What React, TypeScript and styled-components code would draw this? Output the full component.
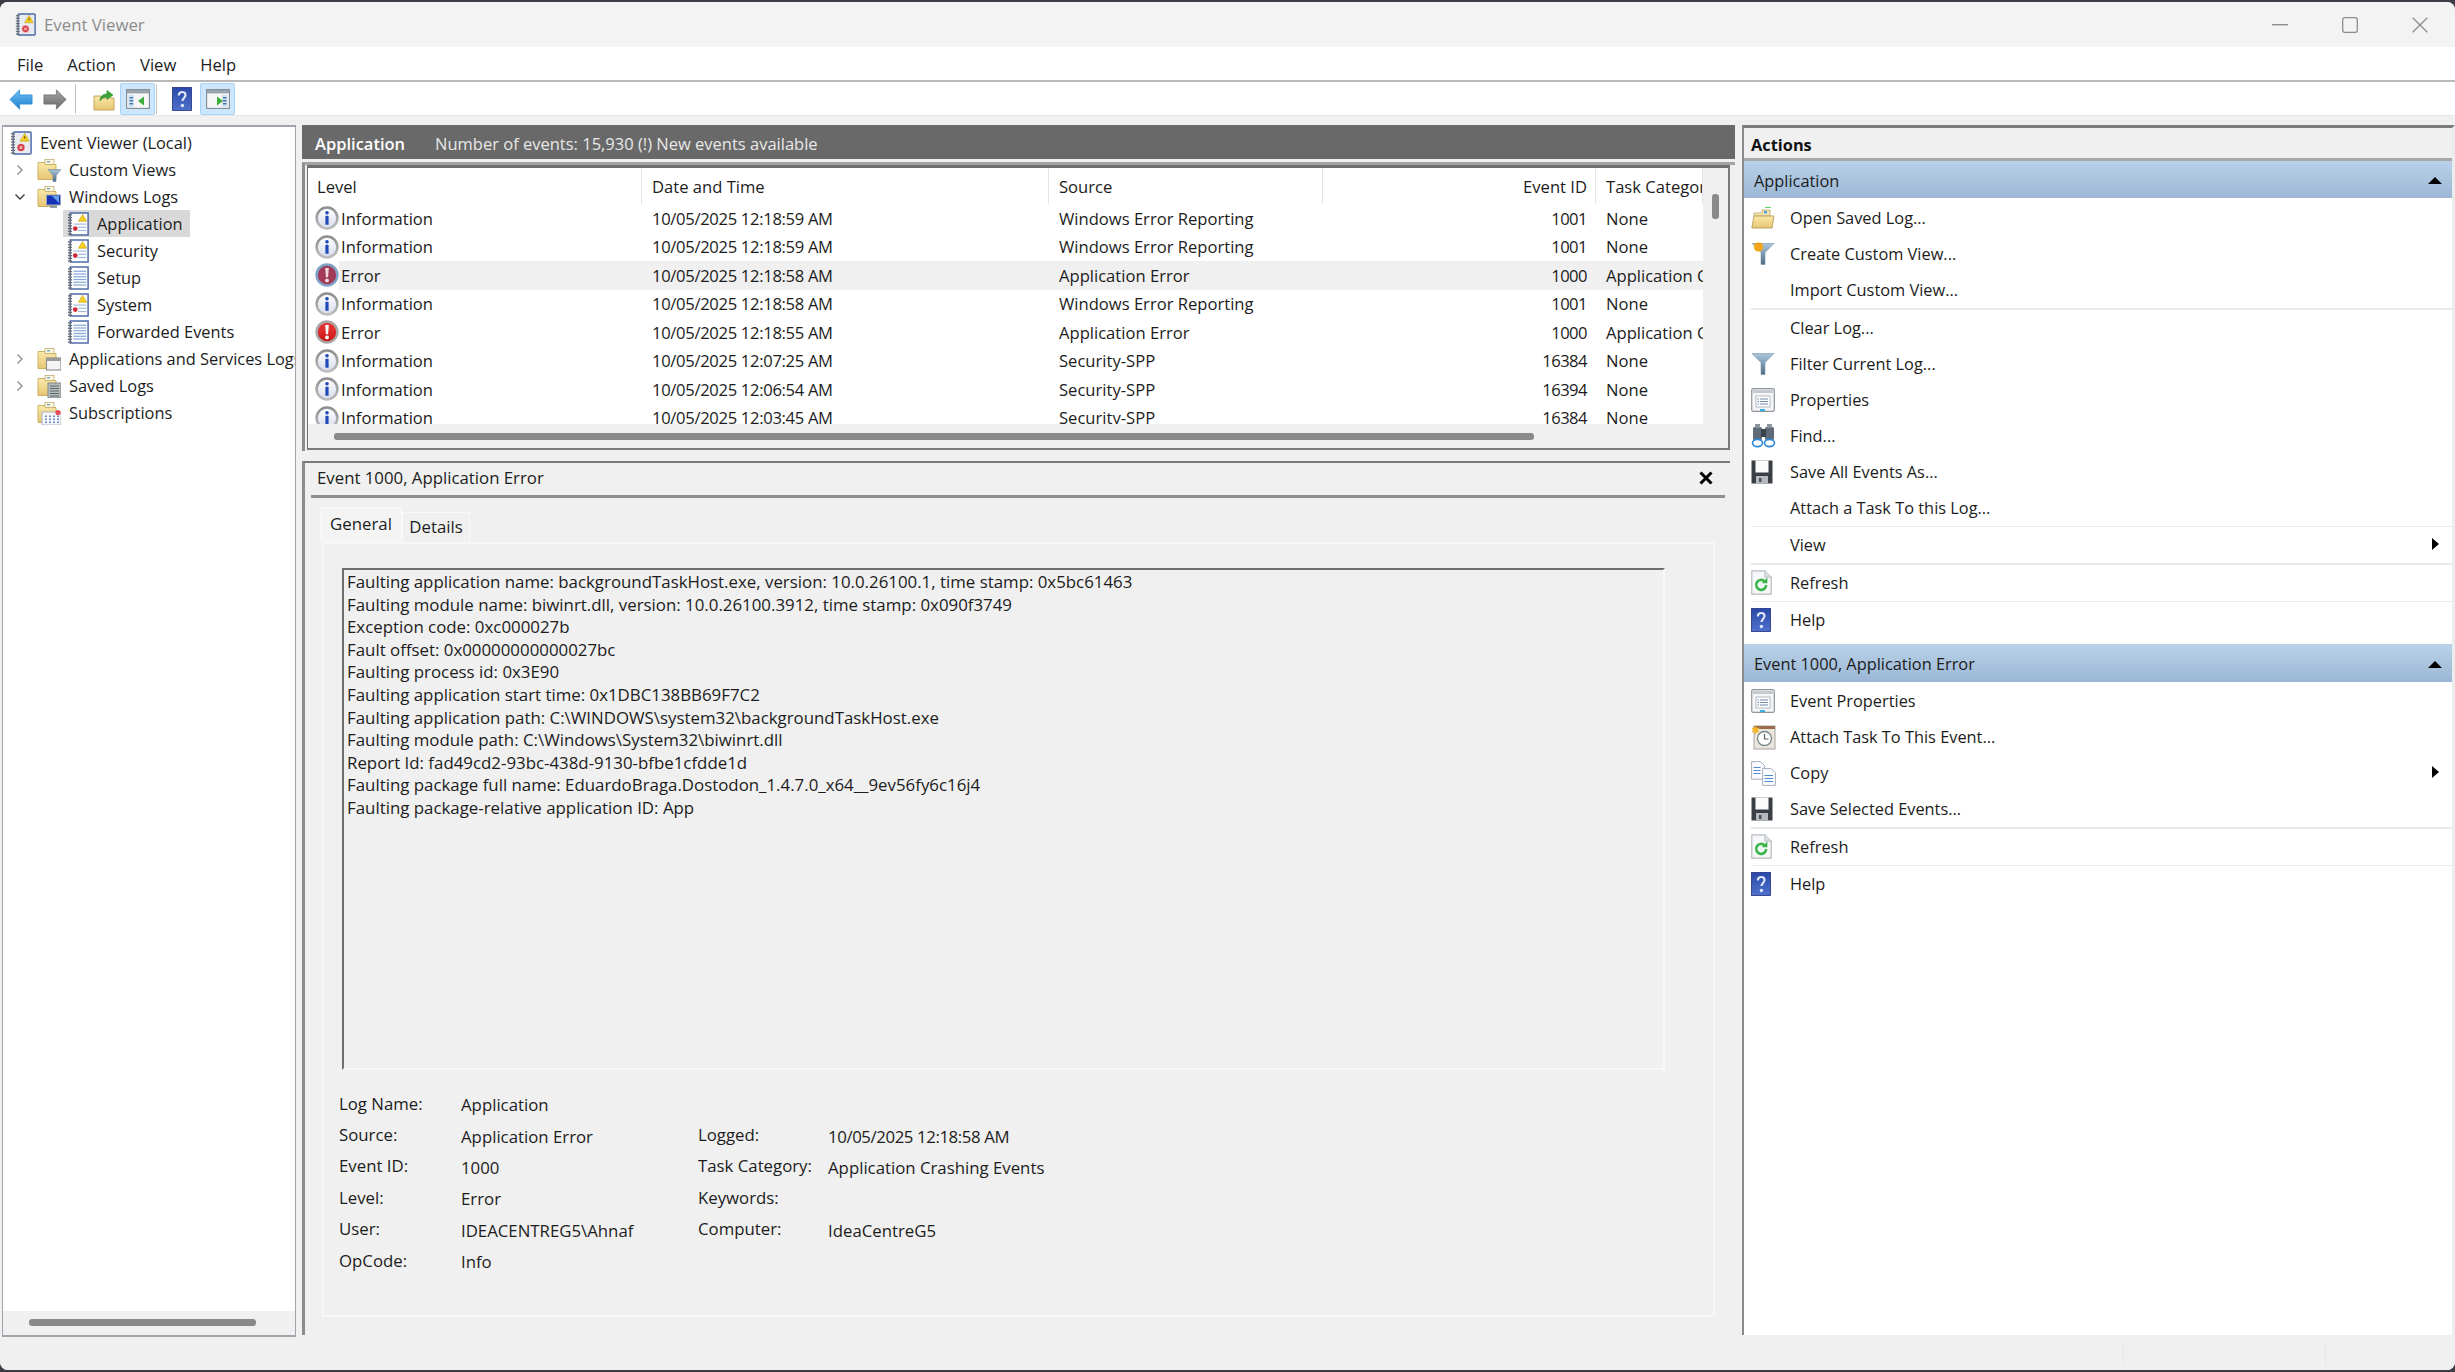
import React from 'react'
import styled, { createGlobalStyle } from 'styled-components'

const UI_FONT = '"Open Sans", "Noto Sans", "Liberation Sans", sans-serif'

const GlobalStyle = createGlobalStyle`
  html, body {
    margin: 0;
    padding: 0;
    background: #3c3c44;
  }
  body {
    font-family: ${UI_FONT};
    font-size: 16.6px;
    color: #1c1c1c;
    overflow: hidden;
  }
  * { box-sizing: border-box; }
`

/* ---------- icons ---------- */

type IconProps = { size?: number }

const GradientDefs = styled.svg`
  position: absolute;
  width: 0;
  height: 0;
`

function Defs() {
  return (
    <GradientDefs aria-hidden="true">
      <defs>
        <linearGradient id="infoFill" x1="0" y1="0" x2="0" y2="1">
          <stop offset="0" stopColor="#ffffff" />
          <stop offset="1" stopColor="#d5dcec" />
        </linearGradient>
        <linearGradient id="infoRing" x1="0" y1="0" x2="0" y2="1">
          <stop offset="0" stopColor="#8e8e8e" />
          <stop offset="1" stopColor="#bcbcbc" />
        </linearGradient>
        <linearGradient id="errFill" x1="0" y1="0" x2="0" y2="1">
          <stop offset="0" stopColor="#ee3a3a" />
          <stop offset="1" stopColor="#c81414" />
        </linearGradient>
        <linearGradient id="folderFill" x1="0" y1="0" x2="0" y2="1">
          <stop offset="0" stopColor="#fbe9a8" />
          <stop offset="1" stopColor="#e6c676" />
        </linearGradient>
        <linearGradient id="blueArrow" x1="0" y1="0" x2="0" y2="1">
          <stop offset="0" stopColor="#6cc0f0" />
          <stop offset="1" stopColor="#1f7fd0" />
        </linearGradient>
        <linearGradient id="grayArrow" x1="0" y1="0" x2="0" y2="1">
          <stop offset="0" stopColor="#a6a6a6" />
          <stop offset="1" stopColor="#6a6a6a" />
        </linearGradient>
        <linearGradient id="helpFill" x1="0" y1="0" x2="0" y2="1">
          <stop offset="0" stopColor="#2a48a8" />
          <stop offset="1" stopColor="#4f72cc" />
        </linearGradient>
        <linearGradient id="funnelFill" x1="0" y1="0" x2="0" y2="1">
          <stop offset="0" stopColor="#a9c6dc" />
          <stop offset="1" stopColor="#4f6f88" />
        </linearGradient>
      </defs>
    </GradientDefs>
  )
}

function InfoIcon({ size = 24 }: IconProps) {
  return (
    <svg width={size} height={size} viewBox="0 0 24 24">
      <circle cx="12" cy="12" r="10.4" fill="url(#infoFill)" stroke="url(#infoRing)" strokeWidth="2.5" />
      <circle cx="12" cy="6.8" r="1.8" fill="#1f49b8" />
      <rect x="10.4" y="9.8" width="3.2" height="9" rx="0.6" fill="#1f49b8" />
    </svg>
  )
}

function ErrorIcon({ size = 24, dim }: IconProps & { dim?: boolean }) {
  return (
    <svg width={size} height={size} viewBox="0 0 24 24">
      <circle
        cx="12"
        cy="12"
        r="10.4"
        fill={dim ? '#a33a58' : 'url(#errFill)'}
        stroke={dim ? '#7da3c4' : '#a9a9a9'}
        strokeWidth="2.5"
      />
      <path d="M10.2 5h3.6l-.7 9.2h-2.2z" fill={dim ? '#f0d8de' : '#fff'} />
      <circle cx="12" cy="17.4" r="1.9" fill={dim ? '#f0d8de' : '#fff'} />
    </svg>
  )
}

function LogBook({ size = 22, alert }: IconProps & { alert?: boolean }) {
  return (
    <svg width={size} height={size + 2} viewBox="0 0 24 26">
      <rect x="3.5" y="1" width="19.5" height="24" fill="#fdfdfd" stroke="#4a6aa8" strokeWidth="1.6" />
      {[3, 6, 9, 12, 15, 18, 21, 24].map((y) => (
        <rect key={y} x="1" y={y - 0.7} width="4.4" height="1.4" fill="#6c6c6c" />
      ))}
      {alert ? (
        <>
          <path d="M17 2.5l4.6 7.5h-9.2z" fill="#f5d020" stroke="#c09a10" strokeWidth="0.6" />
          <rect x="7" y="12.5" width="14" height="1.2" fill="#9db8dc" />
          <rect x="12" y="16" width="9" height="1.2" fill="#9db8dc" />
          <rect x="12" y="19.5" width="9" height="1.2" fill="#9db8dc" />
          <circle cx="9" cy="18" r="2.6" fill="#d02a3a" />
        </>
      ) : (
        [5, 8, 11, 14, 17, 20].map((y) => <rect key={y} x="7" y={y} width="14" height="1.3" fill="#86a8d8" />)
      )}
    </svg>
  )
}

function RootBook({ size = 22 }: IconProps) {
  return (
    <svg width={size} height={size + 2} viewBox="0 0 24 26">
      <rect x="3.5" y="1" width="19.5" height="24" rx="1" fill="#e8ecf2" stroke="#4a6aa8" strokeWidth="1.6" />
      {[3, 6, 9, 12, 15, 18, 21, 24].map((y) => (
        <rect key={y} x="1" y={y - 0.7} width="4.4" height="1.4" fill="#6c6c6c" />
      ))}
      <path d="M16 2.5l5 8.5h-10z" fill="#f5cf20" stroke="#b8960f" strokeWidth="0.6" />
      <rect x="15.4" y="5.4" width="1.2" height="3" fill="#7a5a00" />
      <circle cx="12" cy="18" r="4.4" fill="#d83a44" stroke="#f4f4f4" strokeWidth="0.8" />
      <path d="M10.3 16.3l3.4 3.4M13.7 16.3l-3.4 3.4" stroke="#fff" strokeWidth="1" />
    </svg>
  )
}

function FolderBase() {
  return (
    <>
      <path d="M1 4.5h8.5l1 2H19v15H1z" fill="url(#folderFill)" stroke="#c9a85a" strokeWidth="0.9" />
      <rect x="8" y="1.5" width="9" height="5" fill="#fdf6d8" stroke="#b5a469" strokeWidth="0.7" />
      <rect x="10" y="3" width="3" height="1.4" fill="#7aa4cf" />
    </>
  )
}

function FolderIcon({ size = 24, badge }: IconProps & { badge: 'filter' | 'monitor' | 'window' | 'logs' | 'calendar' }) {
  return (
    <svg width={size} height={size} viewBox="0 0 24 24">
      <FolderBase />
      {badge === 'filter' && (
        <path d="M11 11.5h13l-5 6v6h-3v-6z" fill="url(#funnelFill)" stroke="#5b7488" strokeWidth="0.5" />
      )}
      {badge === 'monitor' && (
        <>
          <rect x="9.5" y="10" width="14" height="10" fill="#1630b8" stroke="#9ba8b6" strokeWidth="1" />
          <path d="M15 11l7 0 0 7z" fill="#5fa0e6" />
          <rect x="13" y="20.5" width="7" height="2.4" fill="#8a94a0" />
        </>
      )}
      {badge === 'window' && (
        <>
          <rect x="9.5" y="11" width="14.5" height="12" fill="#f4f4f4" stroke="#8a8a8a" strokeWidth="1.1" />
          <rect x="9.5" y="11" width="14.5" height="3" fill="#9a9a9a" />
        </>
      )}
      {badge === 'logs' && (
        <>
          <rect x="11" y="9" width="13" height="15" fill="#b7bdbb" stroke="#7a807e" strokeWidth="0.9" />
          {[11.5, 14, 16.5, 19, 21.5].map((y) => (
            <rect key={y} x="13" y={y} width="9" height="1" fill="#5d6a70" />
          ))}
        </>
      )}
      {badge === 'calendar' && (
        <>
          <rect x="5" y="11" width="19" height="13" fill="#f6f8fc" stroke="#9aa7bd" strokeWidth="0.8" />
          <circle cx="21" cy="11.5" r="2.6" fill="#ee4a55" />
          {[8, 12, 16, 20].flatMap((x) =>
            [14.5, 17.5, 20.5].map((y) => <rect key={`${x}-${y}`} x={x} y={y} width="2" height="1.6" fill="#6f8fc0" />)
          )}
        </>
      )}
    </svg>
  )
}

function NavArrow({ dir }: { dir: 'back' | 'forward' }) {
  return (
    <svg width="25" height="23" viewBox="0 0 26 24">
      <path
        d={dir === 'back' ? 'M1 12L11.5 1.5v5.5H25v10H11.5v5.5z' : 'M25 12L14.5 1.5v5.5H1v10h13.5v5.5z'}
        fill={dir === 'back' ? 'url(#blueArrow)' : 'url(#grayArrow)'}
        stroke={dir === 'back' ? '#2a8ad8' : '#6a6a6a'}
        strokeWidth="0.8"
      />
    </svg>
  )
}

function FolderUpIcon() {
  return (
    <svg width="22" height="24" viewBox="0 0 22 24">
      <path d="M1 9h7l2 2h11v12H1z" fill="url(#folderFill)" stroke="#bd9e4e" strokeWidth="0.9" />
      <path d="M7 14c0-5 3-7 7-7V3.5L20 8l-6 4.5V10c-3 0-5 1-7 4z" fill="#3aa63a" stroke="#278a27" strokeWidth="0.6" />
    </svg>
  )
}

function PaneIcon({ side }: { side: 'left' | 'right' }) {
  const left = side === 'left'
  return (
    <svg width="24" height="20" viewBox="0 0 24 20">
      <rect x="0.6" y="0.6" width="22.8" height="18.8" fill="#f6f6f6" stroke="#7d8a96" strokeWidth="1.1" />
      <rect x="1" y="1" width="22" height="3.4" fill="#9aa4ad" />
      <rect x={left ? 2.5 : 16} y="6" width="5.5" height="12" fill="#cfe0f0" />
      {[8, 11, 14].map((y) => (
        <rect key={y} x={left ? 3.5 : 17} y={y} width="3.5" height="1.4" fill="#3f74b0" />
      ))}
      <path d={left ? 'M12 12l6-4.5v9z' : 'M17 12l-6-4.5v9z'} fill="#3cae3c" />
    </svg>
  )
}

function HelpIcon({ size = 20 }: IconProps) {
  return (
    <svg width={size} height={size + 4} viewBox="0 0 20 24">
      <rect x="0.5" y="0.5" width="19" height="23" fill="url(#helpFill)" stroke="#1f2f80" strokeWidth="0.8" />
      <path
        d="M6.8 8.6c0-2.4 1.5-3.6 3.4-3.6s3.3 1.2 3.3 3.1c0 2.9-3 3-3 6"
        fill="none"
        stroke="#dfe6f8"
        strokeWidth="2.2"
      />
      <circle cx="10.4" cy="18.5" r="1.7" fill="#dfe6f8" />
    </svg>
  )
}

function OpenFolderIcon() {
  return (
    <svg width="24" height="24" viewBox="0 0 24 24">
      <rect x="14" y="1" width="6" height="1" fill="#56d856" />
      <path d="M3 10V7h8V4h8v6z" fill="#f4e6b4" stroke="#b89c58" strokeWidth="0.7" />
      <rect x="13" y="5" width="3" height="2.4" fill="#4a9fe0" />
      <path d="M0.8 22l2.2-12h20l-2 12z" fill="url(#folderFill)" stroke="#b89c58" strokeWidth="0.9" />
    </svg>
  )
}

function FunnelIcon({ star }: { star?: boolean }) {
  return (
    <svg width="24" height="24" viewBox="0 0 24 24">
      <path d="M1 1.5h22l-9 9v12h-4v-12z" fill="url(#funnelFill)" stroke="#6a8498" strokeWidth="0.5" />
      {star && <circle cx="7.5" cy="5" r="4.6" fill="#f6a81c" />}
      {star && <path d="M1 1.5h12l-4 1.2z" fill="#f08c10" />}
    </svg>
  )
}

function PropsIcon() {
  return (
    <svg width="24" height="24" viewBox="0 0 24 24">
      <rect x="0.7" y="0.7" width="22.6" height="22.6" rx="1.6" fill="#f4f5f6" stroke="#8e959c" strokeWidth="1.2" />
      <rect x="2" y="2" width="20" height="3" fill="#c6cacd" />
      <rect x="5" y="8" width="14" height="11" fill="#fff" stroke="#9aa0a6" strokeWidth="0.7" />
      {[10.5, 13, 15.5].map((y) => (
        <rect key={y} x="9" y={y} width="8" height="1" fill="#6e8aa8" />
      ))}
      <rect x="6.5" y="10.5" width="1.4" height="1" fill="#3f7fc0" />
      <rect x="6.5" y="13" width="1.4" height="1" fill="#3f7fc0" />
      <rect x="6.5" y="15.5" width="1.4" height="1" fill="#3f7fc0" />
      <rect x="9" y="21" width="5" height="2" fill="#38b0e8" />
    </svg>
  )
}

function BinocularsIcon() {
  return (
    <svg width="25" height="25" viewBox="0 0 25 25">
      <rect x="2" y="4" width="9" height="13" rx="1.5" fill="#5f6b78" />
      <rect x="14" y="4" width="9" height="13" rx="1.5" fill="#5f6b78" />
      <rect x="4" y="1" width="5" height="4" fill="#8b95a0" />
      <rect x="16" y="1" width="5" height="4" fill="#8b95a0" />
      <rect x="10" y="6" width="5" height="8" fill="#39424c" />
      <ellipse cx="6.5" cy="20" rx="5" ry="3.6" fill="#fff" stroke="#2a88d8" strokeWidth="1.6" />
      <ellipse cx="18.5" cy="20" rx="5" ry="3.6" fill="#fff" stroke="#2a88d8" strokeWidth="1.6" />
    </svg>
  )
}

function FloppyIcon() {
  return (
    <svg width="22" height="24" viewBox="0 0 22 24">
      <path d="M0.5 0.5h21v23h-21z" fill="#3a3f45" />
      <rect x="4.5" y="0.5" width="13" height="12" fill="#fbfbfb" />
      <rect x="5" y="16" width="12" height="7.5" fill="#b5b9bd" />
      <rect x="8" y="18" width="2.5" height="4" fill="#4a4f55" />
    </svg>
  )
}

function RefreshIcon() {
  return (
    <svg width="21" height="25" viewBox="0 0 21 25">
      <path d="M0.8 0.8h13l6.4 6.4v17H0.8z" fill="#f6f7f8" stroke="#b8bcc0" strokeWidth="1.2" />
      <path d="M14 0.8v6.4h6.2" fill="#dcdfe2" stroke="#b8bcc0" strokeWidth="1" />
      <path d="M15.2 15a5 5 0 1 1-1.6-3.8" fill="none" stroke="#3bb54a" strokeWidth="2.6" />
      <path d="M16.4 7.6v5.6h-5.6z" fill="#3bb54a" />
    </svg>
  )
}

function ClockTaskIcon() {
  return (
    <svg width="25" height="25" viewBox="0 0 25 25">
      <rect x="3" y="1" width="21" height="23" fill="#eae6de" stroke="#a5a5a0" strokeWidth="1" />
      <rect x="3" y="1" width="21" height="3" fill="#9a6a4a" />
      <circle cx="13.5" cy="13.5" r="7" fill="#fff" stroke="#7d8a8a" strokeWidth="1.4" />
      <path d="M13.5 9v5h4" fill="none" stroke="#55606a" strokeWidth="1.2" />
      <path d="M4.5 0l1.2 3 3-.6-1.8 2.6 1.8 2.6-3-.6-1.2 3-1.2-3-3 .6L2 5 .3 2.4l3 .6z" fill="#f5b52a" />
    </svg>
  )
}

function CopyIcon() {
  return (
    <svg width="25" height="25" viewBox="0 0 25 25">
      <path d="M0.6 0.6h9l3.8 3.8v13.8H0.6z" fill="#fafbff" stroke="#a8aeb8" strokeWidth="1" />
      {[6, 9, 12].map((y) => (
        <rect key={y} x="2.5" y={y} width="7" height="1" fill="#4f8ad0" />
      ))}
      <path d="M11.6 7.6h8.6l4.2 4.2v12.6H11.6z" fill="#fafbff" stroke="#a8aeb8" strokeWidth="1" />
      {[14, 17, 20].map((y) => (
        <rect key={y} x="13.5" y={y} width="8.5" height="1" fill="#4f8ad0" />
      ))}
    </svg>
  )
}

/* ---------- frame ---------- */

const Page = styled.div`
  width: 2455px;
  height: 1372px;
  padding-top: 2px;
  overflow: hidden;
`

const Window = styled.div`
  height: 1368px;
  display: flex;
  flex-direction: column;
  background: #f0f0f0;
  border-radius: 8px;
  overflow: hidden;
`

const TitleBar = styled.div`
  height: 45px;
  flex: none;
  display: flex;
  align-items: center;
  padding-left: 15px;
  background: #f3f3f3;
`

const TitleText = styled.span`
  margin-left: 8px;
  color: #8c8c8c;
  font-size: 16.8px;
`

const WindowControls = styled.div`
  margin-left: auto;
  display: flex;
  align-items: center;
`

const ControlButton = styled.div`
  width: 70px;
  height: 45px;
  display: flex;
  align-items: center;
  justify-content: center;
`

const MenuBar = styled.div`
  height: 35px;
  flex: none;
  display: flex;
  align-items: center;
  padding: 2px 0 0 17px;
  gap: 24px;
  background: #fff;
  border-bottom: 2px solid #b9b9b9;
`

const MenuItem = styled.span`
  font-size: 16.6px;
`

const ToolBar = styled.div`
  height: 34px;
  flex: none;
  display: flex;
  align-items: center;
  padding: 1px 0 0 8px;
  background: #fff;
  border-bottom: 1px solid #e6e6e6;
`

const ToolButton = styled.div<{ $active?: boolean; $gap?: number }>`
  width: ${(p) => (p.$active ? 35 : 26)}px;
  height: 32px;
  flex: none;
  margin-left: ${(p) => p.$gap ?? 0}px;
  display: flex;
  align-items: center;
  justify-content: center;
  background: ${(p) => (p.$active ? '#cde6fb' : 'transparent')};
  border: 1px solid ${(p) => (p.$active ? '#a6d4f7' : 'transparent')};
  border-radius: 2px;
`

const ToolSep = styled.div<{ $gap: number }>`
  width: 1px;
  height: 30px;
  flex: none;
  margin-left: ${(p) => p.$gap}px;
  background: #c4c4c4;
`

const Workspace = styled.div`
  flex: 1;
  min-height: 0;
  display: flex;
  padding: 9px 0 0 2px;
`

const StatusBar = styled.div`
  height: 32px;
  flex: none;
  display: flex;
  justify-content: flex-end;
  background: #f0f0f0;
`

const StatusCell = styled.div<{ $width: number }>`
  width: ${(p) => p.$width}px;
  margin: 4px 0;
  border-left: 1px solid #e6e6e6;
`

/* ---------- tree ---------- */

const TreePane = styled.aside`
  width: 294px;
  flex: none;
  height: 1212px;
  display: flex;
  flex-direction: column;
  background: #fff;
  font-size: 16.4px;
  border: 2px solid #a3a3ad;
  border-right-width: 1px;
  border-left-width: 1px;
`

const TreeBody = styled.div`
  flex: 1;
  padding-top: 2px;
  overflow: hidden;
`

const TreeRow = styled.div<{ $depth: number }>`
  height: 27px;
  display: flex;
  align-items: center;
  white-space: nowrap;
  padding-left: ${(p) => [7, 7, 64][p.$depth]}px;

  svg {
    flex: none;
  }
`

const TreeChevron = styled.span`
  width: 20px;
  flex: none;
  margin-right: 7px;
  display: flex;
  align-items: center;
  justify-content: center;
`

const TreeLabel = styled.span`
  flex: none;
  margin-left: 8px;
  line-height: 27px;
`

const SelectedBand = styled.span`
  display: flex;
  align-items: center;
  height: 27px;
  padding: 0 7px 0 4px;
  margin-left: -4px;
  background: #d9d9d9;
`

const TreeScroll = styled.div`
  height: 24px;
  flex: none;
  padding: 8px 0 0 26px;
  background: #f0f0f0;
`

const ScrollThumb = styled.div<{ $length: number; $vertical?: boolean }>`
  width: ${(p) => (p.$vertical ? 7 : p.$length)}px;
  height: ${(p) => (p.$vertical ? p.$length : 7)}px;
  border-radius: 3px;
  background: #8a8a8a;
`

function Chevron({ open }: { open?: boolean }) {
  return (
    <svg width="12" height="12" viewBox="0 0 12 12">
      <path
        d={open ? 'M1.5 3.5L6 8l4.5-4.5' : 'M3.5 1.5L8 6l-4.5 4.5'}
        fill="none"
        stroke={open ? '#3a3a3a' : '#8c8c8c'}
        strokeWidth="1.3"
      />
    </svg>
  )
}

/* ---------- center ---------- */

const Center = styled.main`
  width: 1433px;
  flex: none;
  margin-left: 6px;
  height: 1210px;
  display: flex;
  flex-direction: column;
`

const Band = styled.div`
  height: 34px;
  flex: none;
  display: flex;
  align-items: center;
  padding: 2px 0 0 13px;
  background: #696969;
  color: #e8e8e8;
  font-size: 16.5px;
`

const BandTitle = styled.strong`
  width: 120px;
  color: #fff;
  font-weight: 600;
`

const ListFrame = styled.section`
  height: 289px;
  flex: none;
  margin-top: 3px;
  padding: 0 5px 1px 2px;
  border-top: 3px solid #a3a3a3;
  border-left: 3px solid #8c8c8c;
`

const ListInner = styled.div`
  height: 100%;
  display: grid;
  grid-template-columns: 1395px 25px;
  background: #f0f0f0;
  border-top: 3px solid #6e6e6e;
  border-left: 1px solid #6e6e6e;
  border-right: 2px solid #7a7a7a;
  border-bottom: 2px solid #7a7a7a;
`

const ListColumn = styled.div`
  display: flex;
  flex-direction: column;
`

const ListBody = styled.div`
  height: 256px;
  flex: none;
  overflow: hidden;
  background: #fff;
`

const COLUMNS = '334px 407px 274px 273px 107px'

const HeaderRow = styled.div`
  height: 36px;
  display: grid;
  grid-template-columns: ${COLUMNS};
`

const HeaderCell = styled.div<{ $right?: boolean; $inset?: number }>`
  display: flex;
  align-items: center;
  justify-content: ${(p) => (p.$right ? 'flex-end' : 'flex-start')};
  padding: ${(p) => (p.$right ? '0 8px 0 0' : `0 0 0 ${p.$inset ?? 10}px`)};
  overflow: hidden;
  white-space: nowrap;
  border-right: 1px solid #e5e5e5;
`

const Row = styled.div<{ $selected?: boolean }>`
  height: 28.5px;
  display: grid;
  grid-template-columns: ${COLUMNS};
  background: ${(p) => (p.$selected ? 'linear-gradient(to right, transparent 31px, #f0f0f0 31px)' : 'transparent')};
`

const Cell = styled.div<{ $right?: boolean; $tracking?: number }>`
  display: flex;
  align-items: center;
  justify-content: ${(p) => (p.$right ? 'flex-end' : 'flex-start')};
  padding: ${(p) => (p.$right ? '0 9px 0 0' : '0 0 0 10px')};
  overflow: hidden;
  white-space: nowrap;
  letter-spacing: ${(p) => p.$tracking ?? 0}px;
`

const LevelCell = styled(Cell)`
  gap: 2px;
  padding-left: 7px;
`

const HScroll = styled.div`
  flex: 1;
  padding: 9px 0 0 26px;
`

const VScroll = styled.div`
  padding: 26px 0 0 9px;
`

const DetailPane = styled.section`
  flex: 1;
  margin: 10px 5px 0 0;
  display: flex;
  flex-direction: column;
  font-size: 16.8px;
  border-top: 2px solid #7a7a7a;
  border-left: 3px solid #8c8c8c;
`

const DetailHead = styled.div`
  height: 32px;
  flex: none;
  display: flex;
  align-items: center;
  justify-content: space-between;
  padding: 0 17px 3px 12px;
`

const DetailRule = styled.div`
  height: 3px;
  flex: none;
  margin: 0 5px 0 6px;
  background: #8f8f8f;
`

const TabStrip = styled.div`
  flex: none;
  display: flex;
  align-items: flex-end;
  height: 35px;
  margin: 9px 0 0 15px;
`

const Tab = styled.div<{ $active?: boolean }>`
  height: ${(p) => (p.$active ? 35 : 30)}px;
  width: ${(p) => (p.$active ? 82 : 68)}px;
  display: flex;
  align-items: center;
  justify-content: center;
  padding-bottom: ${(p) => (p.$active ? 4 : 2)}px;
  background: ${(p) => (p.$active ? '#f4f4f4' : '#f0f0f0')};
  border: 1px solid #f8f8f8;
  border-bottom: none;
`

const TabPanel = styled.div`
  height: 775px;
  flex: none;
  margin: 0 15px 0 17px;
  padding: 24px 0 0 18px;
  border: 2px solid #f7f7f7;
`

const DescriptionBox = styled.pre`
  margin: 0;
  width: 1323px;
  height: 502px;
  padding: 1px 3px;
  font: inherit;
  font-size: 16.85px;
  line-height: 22.6px;
  border-top: 2px solid #6e6e6e;
  border-left: 2px solid #6e6e6e;
  border-right: 2px solid #f8f8f8;
  border-bottom: 2px solid #f8f8f8;
`

const InfoGrid = styled.dl`
  margin: 19px 0 0 -3px;
  display: grid;
  grid-template-columns: 122px 237px 130px 1fr;
  grid-auto-rows: 31.4px;
`

const InfoLabel = styled.dt`
  display: flex;
  align-items: center;
  padding-bottom: 3px;
`

const InfoValue = styled.dd<{ $tracking?: number }>`
  display: flex;
  align-items: center;
  margin: 0;
  letter-spacing: ${(p) => p.$tracking ?? 0}px;
`

/* ---------- actions ---------- */

const ActionsPane = styled.aside`
  flex: 1;
  margin-left: 7px;
  height: 1210px;
  background: #fff;
  font-size: 16.35px;
  border-top: 3px solid #7d7d7d;
  border-left: 2px solid #8a8a8a;
  border-right: 3px solid #ececec;
`

const ActionsHead = styled.div`
  height: 30px;
  display: flex;
  align-items: center;
  padding: 3px 0 0 7px;
  background: #f0f0f0;
  font-weight: 700;
  color: #111;
`

const SectionHead = styled.div`
  height: 40px;
  display: flex;
  align-items: center;
  justify-content: space-between;
  padding: 2px 10px 0 10px;
  border-top: 3px solid;
  border-color: #a8a8a8 transparent transparent;
  background: linear-gradient(to bottom, #bad2ea, #9bb7d4);
  background-clip: padding-box;
`

const SectionHeadLater = styled(SectionHead)`
  height: 38px;
  margin-top: 6px;
  border-top: 0;
`

const ActionList = styled.div<{ $pad: number }>`
  padding-top: ${(p) => p.$pad}px;
`

const ActionRow = styled.div`
  height: 36px;
  display: flex;
  align-items: center;
  padding-right: 13px;
`

const ActionIcon = styled.span`
  width: 46px;
  flex: none;
  padding-left: 7px;
  display: flex;
  align-items: center;
`

const Submenu = styled.span`
  margin: 0 0 3px auto;
  width: 0;
  height: 0;
  border-left: 7px solid #000;
  border-top: 6px solid transparent;
  border-bottom: 6px solid transparent;
`

const Collapse = styled.span`
  width: 0;
  height: 0;
  border-left: 7px solid transparent;
  border-right: 7px solid transparent;
  border-bottom: 7px solid #000;
`

const ActionSep = styled.div`
  height: 1.5px;
  margin-left: 7px;
  background: #e9e9e9;
`

/* ---------- data ---------- */

type TreeItem = {
  depth: 0 | 1 | 2
  label: string
  icon: React.ReactNode
  chevron?: 'open' | 'closed'
  selected?: boolean
}

const tree: TreeItem[] = [
  { depth: 0, label: 'Event Viewer (Local)', icon: <RootBook /> },
  { depth: 1, label: 'Custom Views', chevron: 'closed', icon: <FolderIcon badge="filter" /> },
  { depth: 1, label: 'Windows Logs', chevron: 'open', icon: <FolderIcon badge="monitor" /> },
  { depth: 2, label: 'Application', icon: <LogBook alert />, selected: true },
  { depth: 2, label: 'Security', icon: <LogBook alert /> },
  { depth: 2, label: 'Setup', icon: <LogBook /> },
  { depth: 2, label: 'System', icon: <LogBook alert /> },
  { depth: 2, label: 'Forwarded Events', icon: <LogBook /> },
  { depth: 1, label: 'Applications and Services Logs', chevron: 'closed', icon: <FolderIcon badge="window" /> },
  { depth: 1, label: 'Saved Logs', chevron: 'closed', icon: <FolderIcon badge="logs" /> },
  { depth: 1, label: 'Subscriptions', icon: <FolderIcon badge="calendar" /> },
]

const events = [
  ['Information', '10/05/2025 12:18:59 AM', 'Windows Error Reporting', '1001', 'None'],
  ['Information', '10/05/2025 12:18:59 AM', 'Windows Error Reporting', '1001', 'None'],
  ['Error', '10/05/2025 12:18:58 AM', 'Application Error', '1000', 'Application Crashing Events'],
  ['Information', '10/05/2025 12:18:58 AM', 'Windows Error Reporting', '1001', 'None'],
  ['Error', '10/05/2025 12:18:55 AM', 'Application Error', '1000', 'Application Crashing Events'],
  ['Information', '10/05/2025 12:07:25 AM', 'Security-SPP', '16384', 'None'],
  ['Information', '10/05/2025 12:06:54 AM', 'Security-SPP', '16394', 'None'],
  ['Information', '10/05/2025 12:03:45 AM', 'Security-SPP', '16384', 'None'],
]

const description = `Faulting application name: backgroundTaskHost.exe, version: 10.0.26100.1, time stamp: 0x5bc61463
Faulting module name: biwinrt.dll, version: 10.0.26100.3912, time stamp: 0x090f3749
Exception code: 0xc000027b
Fault offset: 0x00000000000027bc
Faulting process id: 0x3E90
Faulting application start time: 0x1DBC138BB69F7C2
Faulting application path: C:\\WINDOWS\\system32\\backgroundTaskHost.exe
Faulting module path: C:\\Windows\\System32\\biwinrt.dll
Report Id: fad49cd2-93bc-438d-9130-bfbe1cfdde1d
Faulting package full name: EduardoBraga.Dostodon_1.4.7.0_x64__9ev56fy6c16j4
Faulting package-relative application ID: App`

const infoRows = [
  ['Log Name:', 'Application', '', ''],
  ['Source:', 'Application Error', 'Logged:', '10/05/2025 12:18:58 AM'],
  ['Event ID:', '1000', 'Task Category:', 'Application Crashing Events'],
  ['Level:', 'Error', 'Keywords:', ''],
  ['User:', 'IDEACENTREG5\\Ahnaf', 'Computer:', 'IdeaCentreG5'],
  ['OpCode:', 'Info', '', ''],
]

type ActionItem = { label: string; icon?: React.ReactNode; submenu?: boolean; sep?: boolean }

const appActions: ActionItem[] = [
  { label: 'Open Saved Log...', icon: <OpenFolderIcon /> },
  { label: 'Create Custom View...', icon: <FunnelIcon star /> },
  { label: 'Import Custom View...', sep: true },
  { label: 'Clear Log...' },
  { label: 'Filter Current Log...', icon: <FunnelIcon /> },
  { label: 'Properties', icon: <PropsIcon /> },
  { label: 'Find...', icon: <BinocularsIcon /> },
  { label: 'Save All Events As...', icon: <FloppyIcon /> },
  { label: 'Attach a Task To this Log...', sep: true },
  { label: 'View', submenu: true, sep: true },
  { label: 'Refresh', icon: <RefreshIcon />, sep: true },
  { label: 'Help', icon: <HelpIcon /> },
]

const eventActions: ActionItem[] = [
  { label: 'Event Properties', icon: <PropsIcon /> },
  { label: 'Attach Task To This Event...', icon: <ClockTaskIcon /> },
  { label: 'Copy', icon: <CopyIcon />, submenu: true },
  { label: 'Save Selected Events...', icon: <FloppyIcon />, sep: true },
  { label: 'Refresh', icon: <RefreshIcon />, sep: true },
  { label: 'Help', icon: <HelpIcon /> },
]

function ActionRows({ items }: { items: ActionItem[] }) {
  return (
    <>
      {items.map((item) => (
        <React.Fragment key={item.label}>
          <ActionRow>
            <ActionIcon>{item.icon}</ActionIcon>
            {item.label}
            {item.submenu && <Submenu />}
          </ActionRow>
          {item.sep && <ActionSep />}
        </React.Fragment>
      ))}
    </>
  )
}

export default function App() {
  return (
    <Page>
      <GlobalStyle />
      <Defs />
      <Window>
        <TitleBar>
          <RootBook size={21} />
          <TitleText>Event Viewer</TitleText>
          <WindowControls>
            <ControlButton>
              <svg width="16" height="2">
                <rect width="16" height="1.4" fill="#8c8c8c" />
              </svg>
            </ControlButton>
            <ControlButton>
              <svg width="16" height="16">
                <rect x="0.7" y="0.7" width="14.6" height="14.6" rx="2" fill="none" stroke="#8c8c8c" strokeWidth="1.3" />
              </svg>
            </ControlButton>
            <ControlButton>
              <svg width="16" height="16">
                <path d="M0.7 0.7l14.6 14.6M15.3 0.7L0.7 15.3" stroke="#8c8c8c" strokeWidth="1.3" />
              </svg>
            </ControlButton>
          </WindowControls>
        </TitleBar>
        <MenuBar>
          {['File', 'Action', 'View', 'Help'].map((m) => (
            <MenuItem key={m}>{m}</MenuItem>
          ))}
        </MenuBar>
        <ToolBar>
          <ToolButton>
            <NavArrow dir="back" />
          </ToolButton>
          <ToolButton $gap={8}>
            <NavArrow dir="forward" />
          </ToolButton>
          <ToolSep $gap={7} />
          <ToolButton $gap={15}>
            <FolderUpIcon />
          </ToolButton>
          <ToolButton $active $gap={3}>
            <PaneIcon side="left" />
          </ToolButton>
          <ToolSep $gap={1} />
          <ToolButton $gap={12}>
            <HelpIcon />
          </ToolButton>
          <ToolButton $active $gap={5}>
            <PaneIcon side="right" />
          </ToolButton>
        </ToolBar>
        <Workspace>
          <TreePane>
            <TreeBody>
              {tree.map((t) => (
                <TreeRow key={t.label} $depth={t.depth}>
                  {t.depth === 1 && <TreeChevron>{t.chevron && <Chevron open={t.chevron === 'open'} />}</TreeChevron>}
                  {t.selected ? (
                    <SelectedBand>
                      {t.icon}
                      <TreeLabel>{t.label}</TreeLabel>
                    </SelectedBand>
                  ) : (
                    <>
                      {t.icon}
                      <TreeLabel>{t.label}</TreeLabel>
                    </>
                  )}
                </TreeRow>
              ))}
            </TreeBody>
            <TreeScroll>
              <ScrollThumb $length={227} />
            </TreeScroll>
          </TreePane>

          <Center>
            <Band>
              <BandTitle>Application</BandTitle>
              Number of events: 15,930 (!) New events available
            </Band>
            <ListFrame>
              <ListInner>
                <ListColumn>
                  <ListBody>
                    <HeaderRow>
                      <HeaderCell $inset={9}>Level</HeaderCell>
                      <HeaderCell>Date and Time</HeaderCell>
                      <HeaderCell>Source</HeaderCell>
                      <HeaderCell $right>Event ID</HeaderCell>
                      <HeaderCell>Task Category</HeaderCell>
                    </HeaderRow>
                    {events.map((e, i) => (
                      <Row key={i} $selected={i === 2}>
                        <LevelCell>
                          {e[0] === 'Error' ? <ErrorIcon dim={i === 2} /> : <InfoIcon />}
                          {e[0]}
                        </LevelCell>
                        <Cell $tracking={-0.32}>{e[1]}</Cell>
                        <Cell>{e[2]}</Cell>
                        <Cell $right $tracking={-0.55}>
                          {e[3]}
                        </Cell>
                        <Cell>{e[4]}</Cell>
                      </Row>
                    ))}
                  </ListBody>
                  <HScroll>
                    <ScrollThumb $length={1200} />
                  </HScroll>
                </ListColumn>
                <VScroll>
                  <ScrollThumb $vertical $length={25} />
                </VScroll>
              </ListInner>
            </ListFrame>

            <DetailPane>
              <DetailHead>
                Event 1000, Application Error
                <svg width="14" height="14" viewBox="0 0 14 14">
                  <path d="M1.5 1.5l11 11M12.5 1.5l-11 11" stroke="#000" strokeWidth="3" />
                </svg>
              </DetailHead>
              <DetailRule />
              <TabStrip>
                <Tab $active>General</Tab>
                <Tab>Details</Tab>
              </TabStrip>
              <TabPanel>
                <DescriptionBox>{description}</DescriptionBox>
                <InfoGrid>
                  {infoRows.map((r) => (
                    <React.Fragment key={r[0]}>
                      <InfoLabel>{r[0]}</InfoLabel>
                      <InfoValue>{r[1]}</InfoValue>
                      <InfoLabel>{r[2]}</InfoLabel>
                      <InfoValue $tracking={r[2] === 'Logged:' ? -0.4 : 0}>{r[3]}</InfoValue>
                    </React.Fragment>
                  ))}
                </InfoGrid>
              </TabPanel>
            </DetailPane>
          </Center>

          <ActionsPane>
            <ActionsHead>Actions</ActionsHead>
            <SectionHead>
              Application
              <Collapse />
            </SectionHead>
            <ActionList $pad={2}>
              <ActionRows items={appActions} />
            </ActionList>
            <SectionHeadLater>
              Event 1000, Application Error
              <Collapse />
            </SectionHeadLater>
            <ActionList $pad={1}>
              <ActionRows items={eventActions} />
            </ActionList>
          </ActionsPane>
        </Workspace>
        <StatusBar>
          <StatusCell $width={202} />
          <StatusCell $width={130} />
        </StatusBar>
      </Window>
    </Page>
  )
}
